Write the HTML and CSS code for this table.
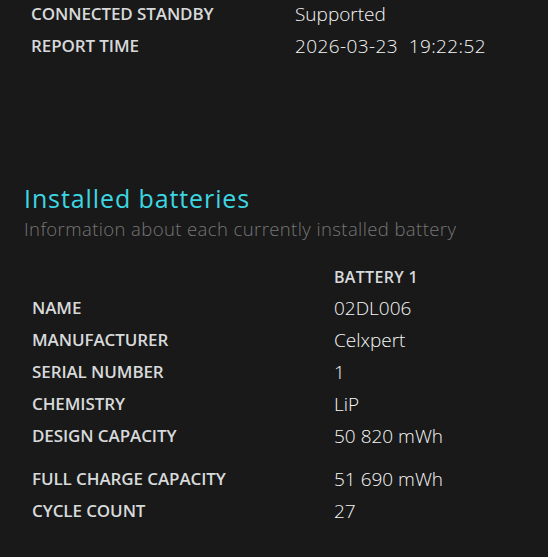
FILE: index.html
```html
<!DOCTYPE html>
<html>
<head>
<meta charset="utf-8">
<link rel="stylesheet" href="styles.css">
</head>
<body>
<div class="page">
  <div class="summary">
    <div class="row"><span class="label">Connected standby</span><span class="value">Supported</span></div>
    <div class="row"><span class="label">Report time</span><span class="value date">2026-03-23&nbsp; 19:22:52</span></div>
  </div>

  <h2 class="heading">Installed batteries</h2>
  <div class="subtitle">Information about each currently installed battery</div>

  <div class="batteries">
    <div class="row head"><span class="label"></span><span class="colhead">Battery 1</span></div>
    <div class="row"><span class="label">Name</span><span class="value">02DL006</span></div>
    <div class="row"><span class="label">Manufacturer</span><span class="value">Celxpert</span></div>
    <div class="row"><span class="label">Serial number</span><span class="value">1</span></div>
    <div class="row"><span class="label">Chemistry</span><span class="value">LiP</span></div>
    <div class="row"><span class="label">Design capacity</span><span class="value">50 820 mWh</span></div>
    <div class="spacer"></div>
    <div class="row"><span class="label">Full charge capacity</span><span class="value">51 690 mWh</span></div>
    <div class="row"><span class="label">Cycle count</span><span class="value">27</span></div>
  </div>
</div>
</body>
</html>
```

FILE: styles.css
```css
html, body {
  margin: 0;
  padding: 0;
  background: #191919;
}
body {
  width: 548px;
  height: 557px;
  overflow: hidden;
  font-family: "Open Sans", "Noto Sans", sans-serif;
  color: #f2f2f2;
}
.summary {
  display: flex;
  flex-direction: column;
  padding-left: 31px;
  margin-top: -2px;
}
.row {
  display: grid;
  height: 32px;
  align-items: center;
  line-height: 32px;
}
.summary .row {
  grid-template-columns: 264px 1fr;
}
.label {
  font-weight: 600;
  font-size: 17px;
  letter-spacing: -0.1px;
  text-transform: uppercase;
  color: #d8d9db;
  white-space: nowrap;
}
.value {
  font-weight: 300;
  font-size: 19px;
  color: #f6f6f6;
  white-space: nowrap;
}
.date {
  letter-spacing: 0.4px;
}
.heading {
  margin: 121px 0 0 24px;
  font-weight: 400;
  font-size: 25px;
  letter-spacing: 0.9px;
  line-height: 30px;
  color: #3dd6e2;
}
.subtitle {
  margin: 2px 0 0 24px;
  font-weight: 300;
  font-size: 18.5px;
  letter-spacing: 0.4px;
  line-height: 28px;
  color: #767676;
}
.batteries {
  display: flex;
  flex-direction: column;
  padding-left: 32px;
  margin-top: 17px;
}
.batteries .row {
  grid-template-columns: 302px 1fr;
}
.batteries .row.head {
  height: 30px;
  line-height: 30px;
  padding-top: 2px;
}
.colhead {
  font-weight: 600;
  font-size: 16px;
  letter-spacing: 0.3px;
  text-transform: uppercase;
  color: #d8d9db;
}
.spacer {
  height: 11px;
}
```
